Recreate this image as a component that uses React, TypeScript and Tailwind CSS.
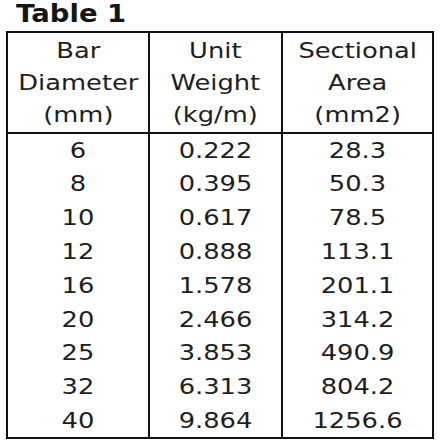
const rows = [
  ["6", "0.222", "28.3"],
  ["8", "0.395", "50.3"],
  ["10", "0.617", "78.5"],
  ["12", "0.888", "113.1"],
  ["16", "1.578", "201.1"],
  ["20", "2.466", "314.2"],
  ["25", "3.853", "490.9"],
  ["32", "6.313", "804.2"],
  ["40", "9.864", "1256.6"],
]

// the source text is a wide verdana-like face, stretch DejaVu to match
function Wide({ children }: { children: React.ReactNode }) {
  return <span className="inline-block scale-x-[1.17]">{children}</span>
}

export default function App() {
  return (
    <div className="w-[440px] h-[444px] bg-white text-[#1e1e1e] font-['DejaVu_Sans','Verdana',sans-serif]">
      <div className="h-[31px] pl-[16px] pt-[1px] text-[25px] leading-[26px] font-bold text-[#151515]">
        <span className="inline-block origin-left scale-x-[1.1]">Table 1</span>
      </div>
      <table className="ml-[6px] border-collapse border-2 border-[#111] text-[22px] text-center">
        <thead>
          <tr className="border-b-2 border-[#111]">
            <th className="w-[142px] font-normal leading-[32px] border-r-2 border-[#111] pt-[2px] pb-[1px]">
              <Wide>Bar<br />Diameter<br />(mm)</Wide>
            </th>
            <th className="w-[133px] font-normal leading-[32px] border-r-2 border-[#111] pt-[2px] pb-[1px]">
              <Wide>Unit<br />Weight<br />(kg/m)</Wide>
            </th>
            <th className="w-[151px] font-normal leading-[32px] pt-[2px] pb-[1px]">
              <Wide>Sectional<br />Area<br />(mm2)</Wide>
            </th>
          </tr>
        </thead>
        <tbody>
          {rows.map((r, i) => (
            <tr key={i} className="h-[33.8px]">
              <td className="border-r-2 border-[#111]"><Wide>{r[0]}</Wide></td>
              <td className="border-r-2 border-[#111]"><Wide>{r[1]}</Wide></td>
              <td><Wide>{r[2]}</Wide></td>
            </tr>
          ))}
        </tbody>
      </table>
    </div>
  )
}
